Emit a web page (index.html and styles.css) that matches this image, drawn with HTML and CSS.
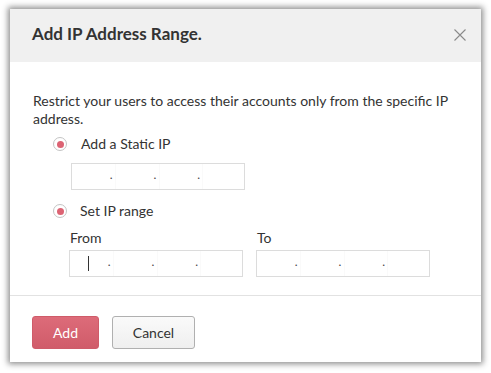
FILE: index.html
```html
<!DOCTYPE html>
<html>
<head>
  <title>Add IP Address Range</title>
  <link rel="stylesheet" href="styles.css">
</head>
<body>
  <div class="dialog">
    <div class="dialog-header">
      <h2>Add IP Address Range.</h2>
      <span class="close">
        <svg width="12" height="12" viewBox="0 0 12 12"><path d="M0.5 0.5 L11.5 11.5 M11.5 0.5 L0.5 11.5" stroke="#8a8a8a" stroke-width="1.1" fill="none"/></svg>
      </span>
    </div>

    <div class="dialog-body">
      <p class="desc">Restrict your users to access their accounts only from the specific IP address.</p>

      <div class="option">
        <label class="radio-row static"><span class="radio"></span>Add a Static IP</label>
        <div class="ip-box static-box">
          <span class="seg"></span><span class="dot">.</span>
          <span class="seg"></span><span class="dot">.</span>
          <span class="seg"></span><span class="dot">.</span>
          <span class="seg"></span>
        </div>
      </div>

      <div class="option">
        <label class="radio-row"><span class="radio"></span>Set IP range</label>
        <div class="range">
          <div class="range-field">
            <div class="field-label">From</div>
            <div class="ip-box">
              <span class="seg"><span class="caret"></span></span><span class="dot">.</span>
              <span class="seg"></span><span class="dot">.</span>
              <span class="seg"></span><span class="dot">.</span>
              <span class="seg"></span>
            </div>
          </div>
          <div class="range-field">
            <div class="field-label">To</div>
            <div class="ip-box">
              <span class="seg"></span><span class="dot">.</span>
              <span class="seg"></span><span class="dot">.</span>
              <span class="seg"></span><span class="dot">.</span>
              <span class="seg"></span>
            </div>
          </div>
        </div>
      </div>
    </div>

    <div class="dialog-footer">
      <button class="btn btn-primary">Add</button>
      <button class="btn btn-default">Cancel</button>
    </div>
  </div>
</body>
</html>
```

FILE: styles.css
```css
body {
  margin: 0;
  padding: 9px 10px;
  background: #fff;
  font-family: Lato, "Open Sans", sans-serif;
  color: #333;
}
.dialog {
  width: 471px;
  background: #fff;
  box-shadow: 0 0 6px 2px rgba(0,0,0,0.45);
}
.dialog-header {
  height: 53px;
  background: #f0f0f0;
  display: flex;
  align-items: center;
  justify-content: space-between;
  padding: 0 15px 0 22px;
}
.dialog-header h2 {
  margin: 0;
  font-size: 17px;
  font-weight: 700;
  color: #333;
  position: relative;
  top: -2px;
}
.close {
  display: flex;
  position: relative;
  top: -1px;
}
.dialog-body {
  padding: 30px 22px 18px 23px;
  border-bottom: 1px solid #e2e2e2;
}
.desc {
  margin: 0;
  font-size: 14px;
  line-height: 18px;
}
.radio-row {
  display: flex;
  align-items: center;
  font-size: 14px;
  line-height: 18px;
  padding-left: 20px;
  gap: 13px;
}
.radio-row.static {
  margin-top: 7px;
  gap: 14px;
}
.radio {
  width: 12px;
  height: 12px;
  border: 1px solid #c4c4c4;
  border-radius: 50%;
  display: flex;
  align-items: center;
  justify-content: center;
}
.radio::after {
  content: "";
  width: 7px;
  height: 7px;
  border-radius: 50%;
  background: #dc6373;
}
.option + .option {
  margin-top: 12px;
}
.ip-box {
  width: 172px;
  height: 25px;
  border: 1px solid #dcdcdc;
  display: flex;
  align-items: center;
}
.static-box {
  margin: 10px 0 0 38px;
}
.seg {
  flex: 1;
  height: 100%;
  position: relative;
}
.seg + .dot + .seg {
  border-left: 1px solid #fafafa;
}
.caret {
  position: absolute;
  left: 18px;
  top: 5px;
  width: 1px;
  height: 15px;
  background: #333;
}
.dot {
  font-size: 12px;
  color: #444;
  width: 2px;
  text-align: center;
  position: relative;
  top: -2px;
  left: -3px;
}
.range {
  display: flex;
  gap: 13px;
  margin: 9px 0 0 36px;
}
.field-label {
  font-size: 14px;
  line-height: 18px;
  margin-bottom: 3px;
  padding-left: 1px;
}
.dialog-footer {
  padding: 20px 22px 13px;
  display: flex;
  gap: 13px;
}
.btn {
  font-family: Lato, "Open Sans", sans-serif;
  font-size: 14px;
  height: 33px;
  border-radius: 3px;
  cursor: pointer;
}
.btn-primary {
  width: 67px;
  background: linear-gradient(#dd6b79, #d05c6a);
  color: #fff;
  border: 1px solid #cf5b69;
}
.btn-default {
  width: 83px;
  background: linear-gradient(#fafafa, #efefef);
  color: #333;
  border: 1px solid #b0b0b0;
}
```
